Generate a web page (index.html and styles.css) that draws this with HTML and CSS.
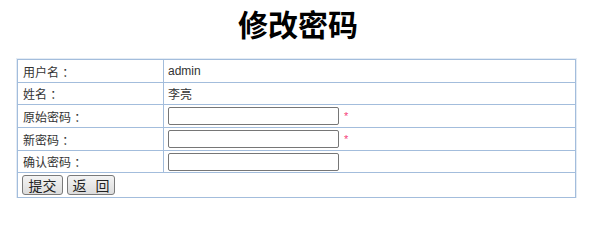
FILE: index.html
```html
<!DOCTYPE html>
<html lang="zh-CN">
<head>
<meta charset="utf-8">
<title>修改密码</title>
<link rel="stylesheet" href="styles.css">
</head>
<body>
<h1 class="title">修改密码</h1>
<table class="form">
  <tr class="row-text first">
    <td class="label">用户名 ：</td>
    <td class="value">admin</td>
  </tr>
  <tr class="row-text">
    <td class="label">姓名 ：</td>
    <td class="value">李亮</td>
  </tr>
  <tr class="row-input">
    <td class="label">原始密码 ：</td>
    <td class="value"><input class="field" type="password"><span class="req">*</span></td>
  </tr>
  <tr class="row-input">
    <td class="label">新密码 ：</td>
    <td class="value"><input class="field" type="password"><span class="req">*</span></td>
  </tr>
  <tr class="row-input short">
    <td class="label">确认密码 ：</td>
    <td class="value"><input class="field" type="password"></td>
  </tr>
  <tr class="row-btn">
    <td class="actions" colspan="2">
      <button class="btn btn-submit" type="button">提交</button><button class="btn btn-back" type="button">返 回</button>
    </td>
  </tr>
</table>
</body>
</html>
```

FILE: styles.css
```css
html, body {
  margin: 0;
  padding: 0;
  background: #ffffff;
}

body {
  font-family: "Liberation Sans", "Noto Sans CJK SC", sans-serif;
  font-size: 12px;
  color: #333333;
}

.title {
  margin: 8px 0 21px;
  font-family: "Noto Sans CJK SC", sans-serif;
  font-weight: bold;
  font-size: 30px;
  line-height: 30px;
  text-align: center;
  color: #000000;
}

.form {
  margin-left: 17px;
  width: 559px;
  border-collapse: collapse;
  border: 1px solid #a3bddc;
  box-shadow: 0 0 0 1px #e4ecf5;
}

.form td {
  border: 1px solid #a3bddc;
  padding: 0;
  vertical-align: middle;
}

.label {
  width: 140px;
  padding-left: 5px !important;
}

.value {
  padding-left: 4px !important;
}

.row-text td {
  height: 21px;
}

.row-text.first td {
  height: 22px;
}

.row-input td {
  height: 22px;
}

.row-input.short td {
  height: 21px;
}

.row-btn td {
  height: 24px;
}

.field {
  box-sizing: border-box;
  width: 171px;
  height: 18px;
  margin: 0;
  padding: 0 2px;
  border: 1px solid #767676;
  border-radius: 2px;
  vertical-align: middle;
  background: #ffffff;
}

.req {
  display: inline-block;
  margin-left: 5px;
  color: #f5407a;
  font-size: 11px;
  vertical-align: middle;
}

.actions {
  padding-left: 4px !important;
}

.btn {
  box-sizing: border-box;
  height: 20px;
  margin: 0 4px 0 0;
  padding: 0;
  font-family: "Noto Sans CJK SC", sans-serif;
  font-size: 14px;
  line-height: 18px;
  color: #222222;
  background: linear-gradient(#f4f4f4, #dcdcdc);
  border: 1px solid #7a7a7a;
  border-radius: 3px;
  vertical-align: middle;
}

.btn-submit {
  width: 41px;
}

.btn-back {
  width: 48px;
  word-spacing: 6px;
}
```
